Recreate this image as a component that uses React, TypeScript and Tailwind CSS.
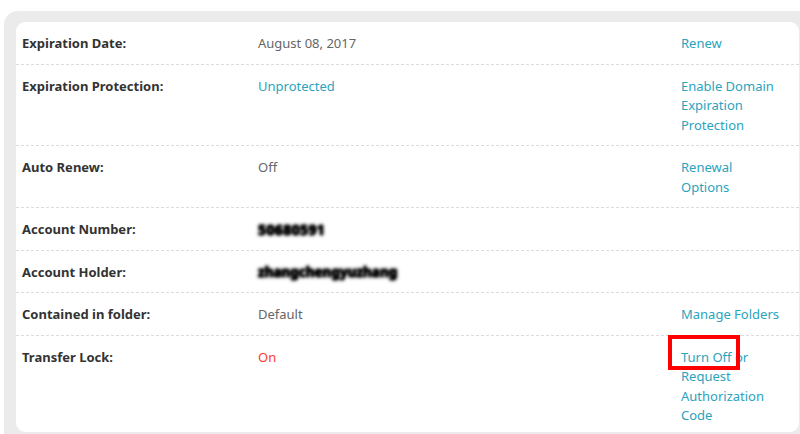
import React from "react";

const link = "text-[#2ba3bd]";

type Row = {
  label: string;
  value: React.ReactNode;
  action?: React.ReactNode;
  last?: boolean;
};

const blob =
  "inline-block align-top leading-[19.5px] font-bold text-black blur-[1.5px] [text-shadow:0_0_1px_#000,0_0_2px_#000,0_0_3px_#000]";

export default function App() {
  const rows: Row[] = [
    { label: "Expiration Date:", value: <span className="text-[#666]">August 08, 2017</span>, action: <span className={link}>Renew</span> },
    {
      label: "Expiration Protection:",
      value: <span className={link}>Unprotected</span>,
      action: (
        <span className={link}>
          Enable Domain
          <br />
          Expiration
          <br />
          Protection
        </span>
      ),
    },
    {
      label: "Auto Renew:",
      value: <span className="text-[#666]">Off</span>,
      action: (
        <span className={link}>
          Renewal
          <br />
          Options
        </span>
      ),
    },
    {
      label: "Account Number:",
      value: <span className={`${blob} text-[14px] tracking-[0.4px]`}>50680591</span>,
    },
    {
      label: "Account Holder:",
      value: <span className={`${blob} text-[13.5px]`}>zhangchengyuzhang</span>,
    },
    { label: "Contained in folder:", value: <span className="text-[#666]">Default</span>, action: <span className={link}>Manage Folders</span> },
    {
      label: "Transfer Lock:",
      value: <span className="text-[#ff3b30]">On</span>,
      action: (
        <span className="relative">
          <span className={link}>Turn Off</span>
          <span className={link}> or</span>
          <br />
          <span className={link}>Request</span>
          <br />
          <span className={link}>Authorization</span>
          <br />
          <span className={link}>Code</span>
          <span className="absolute left-[-13px] top-[-13px] w-[72px] h-[35px] border-[4px] border-[#ff0000]" />
        </span>
      ),
      last: true,
    },
  ];

  return (
    <div
      className="w-[800px] h-[434px] overflow-hidden bg-white"
      style={{ fontFamily: '"Noto Sans", "Open Sans", sans-serif' }}
    >
      <div className="ml-[4px] mt-[11px] w-[820px] h-[440px] rounded-[14px] bg-[#ebebeb] pl-[12px] pt-[11px]">
        <div className="w-[783px] h-[410px] rounded-[9px] bg-white text-[13px] leading-[19.5px]">
          {rows.map((r, i) => (
            <div
              key={i}
              className={`grid grid-cols-[236px_423px_1fr] pl-[6px] pt-[12px] ${r.last ? "pb-[6px]" : "pb-[10px]"} ${i > 0 ? "border-t border-dashed border-[#dcdcdc]" : ""}`}
            >
              <div className="font-bold text-[#333]">{r.label}</div>
              <div className="h-[19.5px]">{r.value}</div>
              <div className="whitespace-nowrap">{r.action}</div>
            </div>
          ))}
        </div>
      </div>
    </div>
  );
}
